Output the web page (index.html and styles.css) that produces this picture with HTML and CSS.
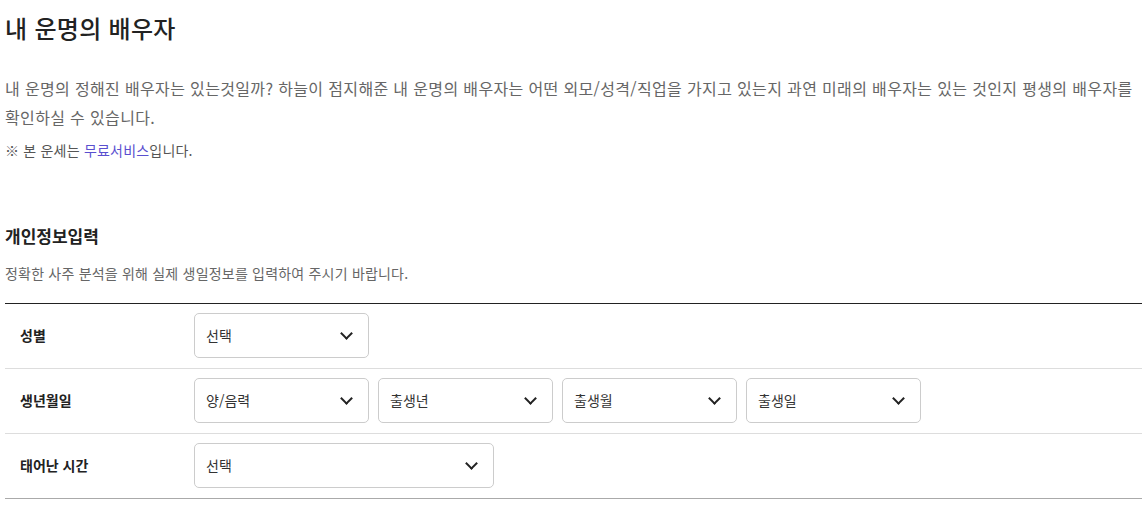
FILE: index.html
```html
<!DOCTYPE html>
<html lang="ko">
<head>
    <meta charset="UTF-8">
    <title>내 운명의 배우자</title>
    <link rel="stylesheet" href="styles.css">
</head>
<body>
    <div class="page">
        <h1 class="title">내 운명의 배우자</h1>
        <p class="desc">내 운명의 정해진 배우자는 있는것일까? 하늘이 점지해준 내 운명의 배우자는 어떤 외모/성격/직업을 가지고 있는지 과연 미래의 배우자는 있는 것인지 평생의 배우자를 확인하실 수 있습니다.</p>
        <p class="note">※ 본 운세는 <span class="free">무료서비스</span>입니다.</p>

        <h2 class="section-title">개인정보입력</h2>
        <p class="section-desc">정확한 사주 분석을 위해 실제 생일정보를 입력하여 주시기 바랍니다.</p>

        <div class="form-table">
            <div class="form-row">
                <div class="form-label">성별</div>
                <div class="form-fields">
                    <div class="select">선택</div>
                </div>
            </div>
            <div class="form-row">
                <div class="form-label">생년월일</div>
                <div class="form-fields">
                    <div class="select">양/음력</div>
                    <div class="select">출생년</div>
                    <div class="select">출생월</div>
                    <div class="select">출생일</div>
                </div>
            </div>
            <div class="form-row">
                <div class="form-label">태어난 시간</div>
                <div class="form-fields">
                    <div class="select wide">선택</div>
                </div>
            </div>
        </div>
    </div>
</body>
</html>
```

FILE: styles.css
```css
body {
    margin: 0;
    font-family: "Noto Sans CJK KR", "Noto Sans", sans-serif;
    color: #222;
    background: #fff;
}

.page {
    padding: 0 6px 0 5px;
}

.title {
    margin: 0;
    padding-top: 10px;
    font-size: 24px;
    font-weight: 500;
    line-height: 36px;
    letter-spacing: 0.3px;
    color: #222;
}

.desc {
    margin: 28px 0 0;
    font-size: 16px;
    line-height: 29px;
    letter-spacing: 0.35px;
    word-break: keep-all;
    color: #666;
}

.note {
    margin: 7px 0 0;
    font-size: 14px;
    line-height: 22px;
    letter-spacing: 0.2px;
    color: #555;
}

.free {
    color: #5a4fcf;
}

.section-title {
    margin: 62px 0 0;
    font-size: 17px;
    font-weight: 700;
    line-height: 26px;
    color: #222;
}

.section-desc {
    margin: 13px 0 0;
    font-size: 14px;
    line-height: 22px;
    letter-spacing: 0.2px;
    color: #666;
}

.form-table {
    margin-top: 19px;
    border-top: 1px solid #222;
    border-bottom: 1px solid #aaa;
}

.form-row {
    display: flex;
    align-items: flex-start;
    height: 64px;
    box-sizing: border-box;
    padding-top: 9px;
}

.form-row + .form-row {
    border-top: 1px solid #ddd;
    height: 65px;
}

.form-label {
    width: 174px;
    padding-left: 15px;
    font-size: 14px;
    font-weight: 700;
    line-height: 45px;
    color: #222;
}

.form-fields {
    display: flex;
    gap: 9px;
}

.select {
    position: relative;
    box-sizing: border-box;
    width: 175px;
    height: 45px;
    padding-left: 11px;
    border: 1px solid #ccc;
    border-radius: 5px;
    font-size: 14px;
    line-height: 43px;
    color: #333;
}

.select.wide {
    width: 300px;
}

.select::after {
    content: "";
    position: absolute;
    right: 17px;
    top: 15px;
    width: 7px;
    height: 7px;
    border-right: 2px solid #222;
    border-bottom: 2px solid #222;
    transform: rotate(45deg);
}
```
